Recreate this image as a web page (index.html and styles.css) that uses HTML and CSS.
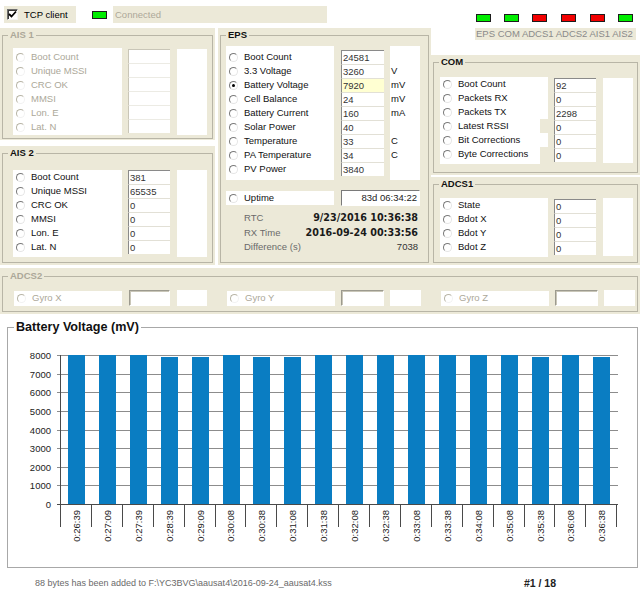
FILE: index.html
```html
<!DOCTYPE html>
<html>
<head>
<meta charset="utf-8">
<title>AAUSAT4 monitor</title>
<link rel="stylesheet" href="styles.css">
</head>
<body>
<div class="top">
  <label class="chk"><span class="cbox"><svg width="9" height="9" viewBox="0 0 9 9"><path d="M1 4 L3.5 6.5 L8 1.5" fill="none" stroke="#000" stroke-width="1.8"/></svg></span>TCP client</label>
  <span class="led g conn-led"></span>
  <span class="conn">Connected</span>
  <div class="leds">
    <span class="led g"></span><span class="led g"></span><span class="led r"></span><span class="led r"></span><span class="led r"></span><span class="led g"></span>
  </div>
</div>

<div class="main">
  <div class="col1">
    <section class="grp ais1 dis">
      <fieldset>
        <legend>AIS 1</legend>
        <div class="gbody">
          <div class="labels">
            <div class="rb"><i></i>Boot Count</div>
            <div class="rb"><i></i>Unique MSSI</div>
            <div class="rb"><i></i>CRC OK</div>
            <div class="rb"><i></i>MMSI</div>
            <div class="rb"><i></i>Lon. E</div>
            <div class="rb"><i></i>Lat. N</div>
          </div>
          <div class="vals">
            <div class="v"></div><div class="v"></div><div class="v"></div><div class="v"></div><div class="v"></div><div class="v"></div>
          </div>
          <div class="units"></div>
        </div>
      </fieldset>
    </section>

    <section class="grp ais2">
      <fieldset>
        <legend>AIS 2</legend>
        <div class="gbody">
          <div class="labels">
            <div class="rb"><i></i>Boot Count</div>
            <div class="rb"><i></i>Unique MSSI</div>
            <div class="rb"><i></i>CRC OK</div>
            <div class="rb"><i></i>MMSI</div>
            <div class="rb"><i></i>Lon. E</div>
            <div class="rb"><i></i>Lat. N</div>
          </div>
          <div class="vals">
            <div class="v">381</div><div class="v">65535</div><div class="v">0</div><div class="v">0</div><div class="v">0</div><div class="v">0</div>
          </div>
          <div class="units"></div>
        </div>
      </fieldset>
    </section>
  </div>

  <div class="col2">
    <section class="grp eps">
      <fieldset>
        <legend>EPS</legend>
        <div class="gbody">
          <div class="labels">
            <div class="rb"><i></i>Boot Count</div>
            <div class="rb"><i></i>3.3 Voltage</div>
            <div class="rb"><i class="on"></i>Battery Voltage</div>
            <div class="rb"><i></i>Cell Balance</div>
            <div class="rb"><i></i>Battery Current</div>
            <div class="rb"><i></i>Solar Power</div>
            <div class="rb"><i></i>Temperature</div>
            <div class="rb"><i></i>PA Temperature</div>
            <div class="rb"><i></i>PV Power</div>
          </div>
          <div class="vals">
            <div class="v">24581</div><div class="v">3260</div><div class="v hl">7920</div><div class="v">24</div><div class="v">160</div><div class="v">40</div><div class="v">33</div><div class="v">34</div><div class="v">3840</div>
          </div>
          <div class="units">
            <div></div><div>V</div><div>mV</div><div>mV</div><div>mA</div><div></div><div>C</div><div>C</div><div></div>
          </div>
        </div>
        <div class="uptime">
          <div class="rb upl"><i></i>Uptime</div>
          <div class="upv">83d 06:34:22</div>
        </div>
        <div class="times">
          <div class="trow"><span>RTC</span><b>9/23/2016 10:36:38</b></div>
          <div class="trow"><span>RX Time</span><b>2016-09-24 00:33:56</b></div>
          <div class="trow"><span>Difference (s)</span><em>7038</em></div>
        </div>
      </fieldset>
    </section>
  </div>

  <div class="col3">
    <div class="ledtext">EPS COM ADCS1 ADCS2 AIS1 AIS2</div>
    <section class="grp com">
      <fieldset>
        <legend>COM</legend>
        <div class="gbody">
          <div class="labels clear">
            <div class="rb"><i></i>Boot Count</div>
            <div class="rb"><i></i>Packets RX</div>
            <div class="rb"><i></i>Packets TX</div>
            <div class="rb short"><i></i>Latest RSSI</div>
            <div class="rb"><i></i>Bit Corrections</div>
            <div class="rb short last"><i></i>Byte Corrections</div>
          </div>
          <div class="vals">
            <div class="v">92</div><div class="v">0</div><div class="v">2298</div><div class="v">0</div><div class="v">0</div><div class="v">0</div>
          </div>
          <div class="units"></div>
        </div>
      </fieldset>
    </section>

    <section class="grp adcs1">
      <fieldset>
        <legend>ADCS1</legend>
        <div class="gbody">
          <div class="labels">
            <div class="rb"><i></i>State</div>
            <div class="rb"><i></i>Bdot X</div>
            <div class="rb"><i></i>Bdot Y</div>
            <div class="rb"><i></i>Bdot Z</div>
          </div>
          <div class="vals">
            <div class="v">0</div><div class="v">0</div><div class="v">0</div><div class="v">0</div>
          </div>
          <div class="units"></div>
        </div>
      </fieldset>
    </section>
  </div>
</div>

<section class="grp adcs2 dis">
  <fieldset>
    <legend>ADCS2</legend>
    <div class="gbody">
      <div class="set s1">
        <div class="rb lbox"><i></i>Gyro X</div>
        <div class="sv"></div>
        <div class="sx"></div>
      </div>
      <div class="set s2">
        <div class="rb lbox"><i></i>Gyro Y</div>
        <div class="sv"></div>
        <div class="sx"></div>
      </div>
      <div class="set s3">
        <div class="rb lbox"><i></i>Gyro Z</div>
        <div class="sv"></div>
        <div class="sx"></div>
      </div>
    </div>
  </fieldset>
</section>

<fieldset class="chart">
  <legend class="ctitle">Battery Voltage (mV)</legend>
  <svg class="plot" width="629" height="232" viewBox="0 0 629 232" xmlns="http://www.w3.org/2000/svg">
    <g stroke="#8c8c8c" stroke-width="1">
      <line x1="49" y1="21.5" x2="610" y2="21.5"/>
      <line x1="49" y1="40.5" x2="610" y2="40.5"/>
      <line x1="49" y1="58.5" x2="610" y2="58.5"/>
      <line x1="49" y1="77.5" x2="610" y2="77.5"/>
      <line x1="49" y1="96.5" x2="610" y2="96.5"/>
      <line x1="49" y1="114.5" x2="610" y2="114.5"/>
      <line x1="49" y1="133.5" x2="610" y2="133.5"/>
      <line x1="49" y1="151.5" x2="610" y2="151.5"/>
    </g>
    <g fill="#0a7dc2">
      <rect x="60" y="21" width="17" height="149"/>
      <rect x="91" y="21" width="17" height="149"/>
      <rect x="122" y="21" width="17" height="149"/>
      <rect x="153" y="23" width="17" height="147"/>
      <rect x="184" y="23" width="17" height="147"/>
      <rect x="215" y="21" width="17" height="149"/>
      <rect x="245" y="23" width="17" height="147"/>
      <rect x="276" y="23" width="17" height="147"/>
      <rect x="307" y="21" width="17" height="149"/>
      <rect x="338" y="21" width="17" height="149"/>
      <rect x="369" y="21" width="17" height="149"/>
      <rect x="400" y="21" width="17" height="149"/>
      <rect x="431" y="21" width="17" height="149"/>
      <rect x="462" y="21" width="17" height="149"/>
      <rect x="493" y="21" width="17" height="149"/>
      <rect x="524" y="23" width="17" height="147"/>
      <rect x="554" y="21" width="17" height="149"/>
      <rect x="585" y="23" width="17" height="147"/>
    </g>
    <g stroke="#4a4a4a" stroke-width="1">
      <line x1="49" y1="170.5" x2="610" y2="170.5"/>
      <line x1="52.5" y1="21" x2="52.5" y2="171"/>
      <line x1="52.5" y1="170" x2="52.5" y2="193"/>
      <line x1="83.5" y1="170" x2="83.5" y2="193"/>
      <line x1="114.5" y1="170" x2="114.5" y2="193"/>
      <line x1="145.5" y1="170" x2="145.5" y2="193"/>
      <line x1="176.5" y1="170" x2="176.5" y2="193"/>
      <line x1="207.5" y1="170" x2="207.5" y2="193"/>
      <line x1="237.5" y1="170" x2="237.5" y2="193"/>
      <line x1="268.5" y1="170" x2="268.5" y2="193"/>
      <line x1="299.5" y1="170" x2="299.5" y2="193"/>
      <line x1="330.5" y1="170" x2="330.5" y2="193"/>
      <line x1="361.5" y1="170" x2="361.5" y2="193"/>
      <line x1="392.5" y1="170" x2="392.5" y2="193"/>
      <line x1="423.5" y1="170" x2="423.5" y2="193"/>
      <line x1="454.5" y1="170" x2="454.5" y2="193"/>
      <line x1="485.5" y1="170" x2="485.5" y2="193"/>
      <line x1="516.5" y1="170" x2="516.5" y2="193"/>
      <line x1="546.5" y1="170" x2="546.5" y2="193"/>
      <line x1="577.5" y1="170" x2="577.5" y2="193"/>
      <line x1="608.5" y1="170" x2="608.5" y2="193"/>
    </g>
    <g class="ylab" text-anchor="end">
      <text x="43" y="25">8000</text>
      <text x="43" y="44">7000</text>
      <text x="43" y="62">6000</text>
      <text x="43" y="81">5000</text>
      <text x="43" y="100">4000</text>
      <text x="43" y="118">3000</text>
      <text x="43" y="137">2000</text>
      <text x="43" y="155">1000</text>
      <text x="43" y="174">0</text>
    </g>
    <g class="xlab" text-anchor="end" dominant-baseline="central">
      <text transform="translate(68,176) rotate(-90)">0:26:39</text>
      <text transform="translate(99,176) rotate(-90)">0:27:09</text>
      <text transform="translate(130,176) rotate(-90)">0:27:39</text>
      <text transform="translate(161,176) rotate(-90)">0:28:39</text>
      <text transform="translate(192,176) rotate(-90)">0:29:09</text>
      <text transform="translate(222,176) rotate(-90)">0:30:08</text>
      <text transform="translate(253,176) rotate(-90)">0:30:38</text>
      <text transform="translate(284,176) rotate(-90)">0:31:08</text>
      <text transform="translate(315,176) rotate(-90)">0:31:38</text>
      <text transform="translate(346,176) rotate(-90)">0:32:08</text>
      <text transform="translate(377,176) rotate(-90)">0:32:38</text>
      <text transform="translate(408,176) rotate(-90)">0:33:08</text>
      <text transform="translate(439,176) rotate(-90)">0:33:38</text>
      <text transform="translate(470,176) rotate(-90)">0:34:08</text>
      <text transform="translate(501,176) rotate(-90)">0:35:08</text>
      <text transform="translate(532,176) rotate(-90)">0:35:38</text>
      <text transform="translate(562,176) rotate(-90)">0:36:08</text>
      <text transform="translate(593,176) rotate(-90)">0:36:38</text>
    </g>
  </svg>
</fieldset>

<div class="status">
  <span class="msg">88 bytes has been added to F:\YC3BVG\aausat4\2016-09-24_aausat4.kss</span>
  <span class="pg">#1 / 18</span>
</div>
</body>
</html>
```

FILE: styles.css
```css
* { box-sizing: border-box; }
html, body { margin: 0; padding: 0; }
body {
  width: 640px; height: 597px; overflow: hidden;
  background: #fff;
  font-family: "Liberation Sans", Arial, sans-serif;
  font-size: 9.5px; line-height: 14px; color: #111;
}

/* top bar */
.top { display: flex; align-items: flex-start; height: 28px; }
.chk {
  display: flex; align-items: center;
  margin: 6px 0 0 4px; width: 72px; height: 17px;
  padding-left: 3px; background: #ece9d8; color: #000;
}
.cbox {
  width: 11px; height: 11px; margin-right: 6px; flex: none;
  display: flex; align-items: center; justify-content: center;
  background: #fff; border: 1px solid; border-color: #6d6d6d #f4f4f4 #f4f4f4 #6d6d6d;
  box-shadow: inset 1px 1px 0 #3a3a3a;
}
.cbox svg { display: block; }
.led { display: block; width: 15px; height: 8px; border: 1px solid #1c1c1c; }
.led.g { background: #00ee00; }
.led.r { background: #f20000; }
.conn-led { margin: 11px 0 0 16px; }
.conn {
  display: flex; align-items: center;
  margin: 6px 0 0 6px; width: 214px; height: 17px;
  padding-left: 2px; background: #ece9d8; color: #aca899;
}
.leds {
  display: grid; grid-template-columns: 28px 28px 29px 29px 28px 15px;
  margin: 14px 0 0 149px;
}

/* main columns */
.main { display: flex; align-items: flex-start; }
.col1 { width: 215px; }
.col2 { width: 213px; margin-left: 3px; }
.col3 { width: 209px; }

.ledtext {
  margin-left: 44px; width: 161px; height: 12px; line-height: 11px;
  padding-left: 1px; background: #ece9d8; color: #8a8a8a; white-space: nowrap;
}

/* group boxes */
.grp { background: #ece9d8; padding: 1px 2px 0 2px; }
fieldset {
  display: block; margin: 0; padding: 0; min-width: 0;
  border: 1px solid #b8b5a6;
}
legend {
  margin-left: 5px; padding: 0 2px;
  font-weight: bold; font-size: 9.5px; line-height: 12px; color: #111;
}
.dis legend { color: #aca899; }
.gbody { display: flex; align-items: flex-start; }
.labels { background: #fff; }
.labels.clear { background: transparent; }
.rb { display: flex; align-items: center; height: 14px; white-space: nowrap; color: #111; }
.dis .rb { color: #aca899; }
.rb i {
  position: relative; flex: none;
  width: 9px; height: 9px; margin: 0 6px 0 3px;
  border-radius: 50%; border: 1px solid;
  border-color: #7a7a7a #e6e6e6 #e6e6e6 #7a7a7a; background: #fff;
}
.dis .rb i { border-color: #b8b5a6 #f2f2f2 #f2f2f2 #b8b5a6; }
.rb i.on::after {
  content: ""; position: absolute; left: 2px; top: 2px;
  width: 3px; height: 3px; border-radius: 50%; background: #000;
}
.v {
  height: 14px; padding-left: 1px; line-height: 13px; color: #333;
  background: #fff; border-left: 1px solid #8a8a8a; border-top: 1px solid #e2e0d6;
}
.v:first-child { border-top-color: #8a8a8a; }
.dis .v { border-left-color: #c9c6b8; border-top-color: #ecebe4; }
.dis .v:first-child { border-top-color: #c9c6b8; }
.v.hl { background: #ffffd2; }
.units { background: #fff; }
.units div { height: 14px; padding-left: 1px; color: #111; }

/* AIS 1 */
.ais1 { height: 112px; }
.ais1 fieldset { width: 211px; height: 110px; }
.ais1 .gbody { padding: 7px 0 0 10px; }
.ais1 .labels { width: 109px; padding: 2px 0 1px; }
.ais1 .vals { width: 42px; margin: 1px 0 0 6px; }
.ais1 .units { width: 30px; height: 86px; margin: 1px 0 0 7px; }

/* AIS 2 */
.ais2 { height: 119px; margin-top: 6px; }
.ais2 fieldset { width: 211px; height: 116px; }
.ais2 .gbody { padding: 11px 0 0 10px; }
.ais2 .labels { width: 109px; padding: 0 0 3px; }
.ais2 .vals { width: 42px; margin: 0 0 0 6px; }
.ais2 .units { width: 30px; height: 87px; margin: 0 0 0 7px; }

/* EPS */
.eps { height: 237px; }
.eps fieldset { width: 209px; height: 234px; }
.eps .gbody { padding: 5px 0 0 5px; }
.eps .labels { width: 108px; padding: 4px 0 4px; }
.eps .vals { width: 43px; margin: 4px 0 0 7px; }
.eps .units { width: 30px; height: 134px; margin: 0 0 0 6px; padding-top: 4px; }
.uptime { display: flex; align-items: center; margin: 10px 0 0 5px; }
.upl { width: 108px; background: #fff; }
.upv {
  width: 79px; height: 16px; margin-left: 7px; padding-right: 2px;
  text-align: right; line-height: 14px; background: #fff; color: #222;
  border: 1px solid; border-color: #7a7a7a #fff #fff #7a7a7a;
}
.times { margin: 5px 0 0 23px; width: 174px; }
.trow { display: flex; justify-content: space-between; height: 14.5px; line-height: 14px; color: #6a6a6a; }
.trow b {
  font-family: "DejaVu Sans", Verdana, sans-serif; font-weight: bold; font-size: 9.6px; color: #1a1a1a;
}
.trow em { font-style: normal; color: #333; }

/* COM */
.com { height: 120px; margin-top: 15px; }
.com fieldset { width: 205px; height: 117px; }
.com .gbody { padding: 9px 0 0 6px; }
.com .rb { width: 108px; background: #fff; }
.com .rb.short { width: 100px; }
.com .rb.last { height: 17px; padding-bottom: 3px; }
.com .vals { width: 42px; margin: 1px 0 0 6px; }
.com .units { width: 30px; height: 85px; margin: 1px 0 0 7px; }

/* ADCS1 */
.adcs1 { height: 88px; margin-top: 2px; }
.adcs1 fieldset { width: 205px; height: 85px; }
.adcs1 .gbody { padding: 8px 0 0 6px; }
.adcs1 .labels { width: 108px; padding: 0 0 3px; }
.adcs1 .vals { width: 42px; margin: 1px 0 0 6px; }
.adcs1 .units { width: 30px; height: 58px; margin: 0 0 0 7px; }

/* ADCS2 */
.adcs2 { height: 46px; margin-top: 3px; padding-top: 2px; }
.adcs2 fieldset { width: 636px; height: 42px; }
.adcs2 .gbody { padding: 8px 0 0 11px; }
.set { display: flex; align-items: center; }
.s2, .s3 { margin-left: 20px; }
.lbox { width: 108px; height: 15px; background: #fff; }
.sv {
  width: 41px; height: 16px; margin-left: 7px; background: #fff;
  border: 1px solid; border-color: #9c9a8e #fff #fff #9c9a8e;
  box-shadow: inset 1px 1px 0 #c9c6b8;
}
.s2 .sv, .s3 .sv { width: 43px; margin-left: 6px; }
.sx { width: 30px; height: 16px; margin-left: 7px; background: #fff; }
.s2 .sx, .s3 .sx { margin-left: 6px; width: 31px; }

/* chart */
.chart {
  margin: 7px 0 0 7px; width: 631px; height: 247px;
  background: #fff; border-color: #a8a8a8;
}
.chart .ctitle {
  margin-left: 6px; padding: 0 2px;
  font-family: "Liberation Sans", Arial, sans-serif;
  font-weight: bold; font-size: 12.6px; line-height: 13px; color: #111;
}
.plot { display: block; }
.ylab, .xlab { font-family: "Liberation Sans", Arial, sans-serif; font-size: 9.5px; fill: #222; }

/* status */
.status { display: flex; align-items: center; height: 29px; padding-left: 35px; color: #6a6a6a; }
.status .msg { font-size: 9px; }
.status .pg { margin-left: auto; margin-right: 84px; color: #222; font-weight: bold; font-size: 10.5px; }
```
